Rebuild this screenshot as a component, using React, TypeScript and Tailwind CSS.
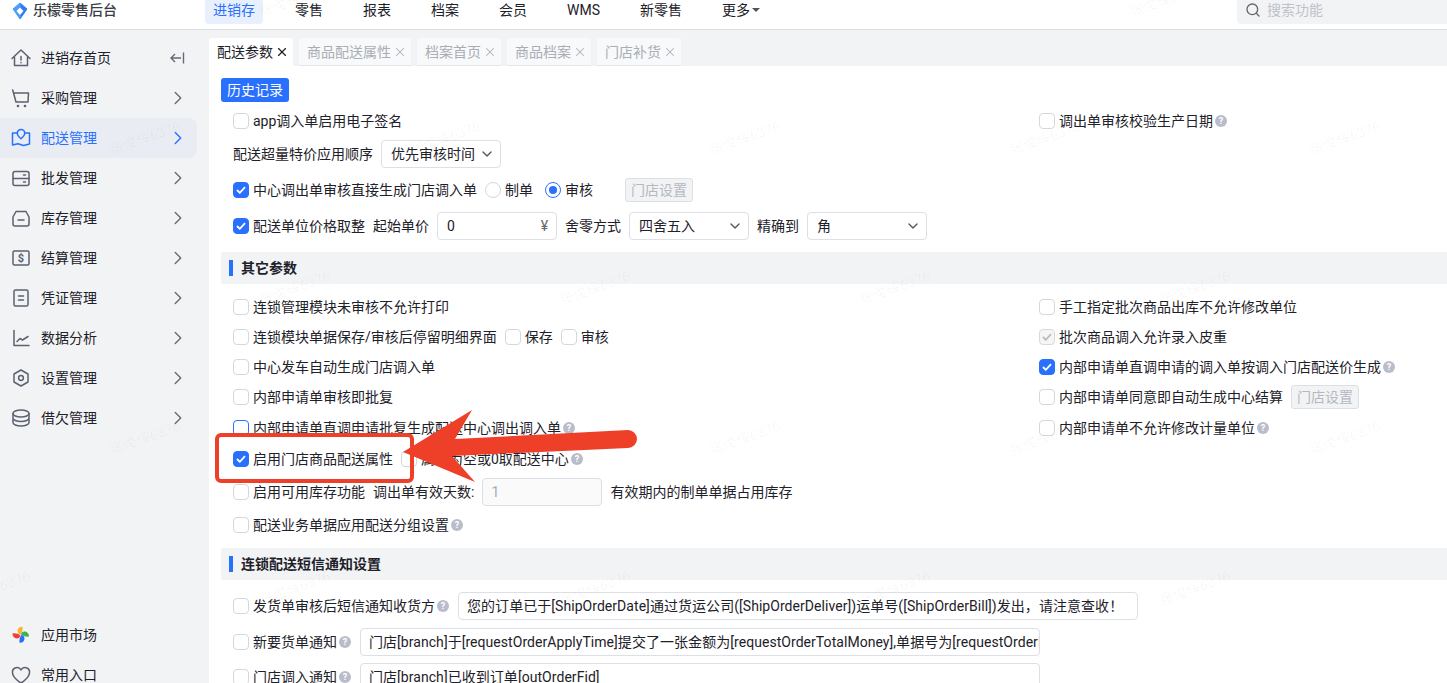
import type { ReactNode } from 'react';
import { ChevronDown, ChevronRight, Search, X } from 'lucide-react';

const navItems = ['进销存', '零售', '报表', '档案', '会员', 'WMS', '新零售'];
const tabs = ['配送参数', '商品配送属性', '档案首页', '商品档案', '门店补货'];

function Icon({ children, className = 'text-[#5c6070]' }: { children: ReactNode; className?: string }) {
  return (
    <svg width="20" height="20" viewBox="0 0 20 20" fill="none" stroke="currentColor" strokeWidth="1.5" strokeLinecap="round" strokeLinejoin="round" className={`shrink-0 ${className}`}>
      {children}
    </svg>
  );
}

const menu: { label: string; icon: ReactNode; active?: boolean }[] = [
  {
    label: '采购管理',
    icon: <><path d="M1.700 2L5 14h12l.5-9H3" /><circle cx="7" cy="18" r=".6" /><circle cx="14" cy="18" r=".6" /></>,
  },
  {
    label: '配送管理',
    active: true,
    icon: <><path d="M6.500 5H1.500v12l5.500-1.200 5.500 1.700 6-1.500V5h-5" /><path d="M10 1.500A3.800 3.800 0 0 1 13.800 5.300c0 2.200-3.800 5.500-3.800 5.500S6.200 7.500 6.200 5.300A3.800 3.800 0 0 1 10 1.500z" /></>,
  },
  {
    label: '批发管理',
    icon: <><rect x="2" y="3.500" width="16" height="14" rx="2" /><path d="M2 10.500h16M12.500 14h2M12.500 7h2" /></>,
  },
  {
    label: '库存管理',
    icon: <><path d="M5 3.500h10l3 5.500v7a2 2 0 0 1-2 2H4a2 2 0 0 1-2-2V9z" /><path d="M7 12h6" /></>,
  },
  {
    label: '结算管理',
    icon: <><rect x="2" y="3" width="16" height="14" rx="1.500" /><text x="10" y="14" textAnchor="middle" fontSize="11" fontWeight="700" fill="currentColor" stroke="none">$</text></>,
  },
  {
    label: '凭证管理',
    icon: <><rect x="3" y="2" width="14" height="16" rx="1.500" /><path d="M7.500 8h5M7.500 12h5" /></>,
  },
  {
    label: '数据分析',
    icon: <><path d="M3 2.500V17.500h15" /><path d="M6 13.500l3-3 2.500 1.500L17 8.500" /></>,
  },
  {
    label: '设置管理',
    icon: <><path d="M10 2l7 4v8l-7 4-7-4V6z" /><circle cx="10" cy="10" r="2.400" /></>,
  },
  {
    label: '借欠管理',
    icon: <><ellipse cx="10" cy="5.500" rx="8" ry="3.500" /><path d="M2 5.500v9c0 1.900 3.600 3.500 8 3.500s8-1.600 8-3.500v-9M2 10c0 1.900 3.600 3.500 8 3.500s8-1.600 8-3.500" /></>,
  },
];

function Check({ checked, disabled, focus }: { checked?: boolean; disabled?: boolean; focus?: boolean }) {
  if (checked) {
    return (
      <span className={`flex h-4 w-4 shrink-0 items-center justify-center rounded-[4px] border ${disabled ? 'border-[#d9d9d9] bg-[#f5f5f5]' : 'border-[#2970ff] bg-[#2970ff]'}`}>
        <svg width="10" height="8" viewBox="0 0 10 8" fill="none" stroke={disabled ? '#bbbbbb' : '#ffffff'} strokeWidth="1.800"><path d="M1 4l2.800 2.800L9 1.200" /></svg>
      </span>
    );
  }
  return <span className={`block h-4 w-4 shrink-0 rounded-[4px] border bg-white ${focus ? 'border-[#2970ff]' : 'border-[#d5d7dc]'}`} />;
}

function Opt({ children, checked, disabled, focus }: { children: ReactNode; checked?: boolean; disabled?: boolean; focus?: boolean }) {
  return (
    <span className="flex items-center gap-1 whitespace-nowrap">
      <Check checked={checked} disabled={disabled} focus={focus} />
      {children}
    </span>
  );
}

function Help() {
  return <span className="ml-[2px] flex h-3 w-3 shrink-0 items-center justify-center rounded-full bg-[#b9bdcb] text-[9px] leading-none font-bold text-white">?</span>;
}

function Radio({ label, checked }: { label: string; checked?: boolean }) {
  return (
    <span className="flex items-center gap-1">
      <span className={`flex h-4 w-4 items-center justify-center rounded-full border ${checked ? 'border-[#2970ff]' : 'border-[#d5d7dc]'}`}>
        {checked && <span className="h-2 w-2 rounded-full bg-[#2970ff]" />}
      </span>
      {label}
    </span>
  );
}

function SelectBox({ value }: { value: string }) {
  return (
    <span className="flex h-7 w-[120px] shrink-0 items-center justify-between rounded-[4px] border border-[#dcdfe6] pr-[5px] pl-[9px]">
      {value}
      <ChevronDown size={16} className="text-[#555]" />
    </span>
  );
}

function DisabledBtn() {
  return <span className="flex h-6 w-[68px] shrink-0 items-center justify-center rounded-[3px] border border-[#dddfe3] bg-[#f2f3f5] text-[#b5b8bf]">门店设置</span>;
}

function TextLine({ value }: { value: string }) {
  return <span className="block h-7 w-[680px] shrink-0 overflow-hidden rounded-[4px] border border-[#dcdfe6] px-2 leading-[27px] tracking-[0.05px] whitespace-nowrap">{value}</span>;
}

function Row({ left, right, className }: { left: ReactNode; right?: ReactNode; className: string }) {
  return (
    <div className={`grid grid-cols-[806px_1fr] items-center pl-3 ${className}`}>
      <div className="flex items-center">{left}</div>
      <div className="flex items-center">{right}</div>
    </div>
  );
}

function SectionBand({ title, className }: { title: string; className: string }) {
  return (
    <div className={`flex h-8 items-center gap-2 rounded-l-[2px] bg-[#f2f3f5] pl-2 font-bold ${className}`}>
      <span className="h-4 w-1 bg-[#2970ff]" />
      {title}
    </div>
  );
}

function Sidebar() {
  return (
    <aside className="flex w-[209px] shrink-0 flex-col overflow-hidden bg-[#f2f3f5] pt-2">
      <div className="flex h-10 shrink-0 items-center gap-[10px] pr-6 pl-[11px]">
        <Icon>
          <path d="M1 10.500L10 2l9 8.500" />
          <path d="M3.500 9v8.500h13V9" />
          <path d="M10 8.500v3.500M10 14.500v.3" />
        </Icon>
        <span className="flex-1">进销存首页</span>
        <svg width="16" height="14" viewBox="0 0 16 14" fill="none" stroke="#666a75" strokeWidth="1.400"><path d="M14.500 1.500v11M12 7H2M6 3L2 7l4 4" /></svg>
      </div>
      {menu.map((item) => (
        <div key={item.label} className={`flex h-10 w-[197px] shrink-0 items-center gap-[10px] rounded-r-lg pr-2 pl-[11px] ${item.active ? 'bg-[#e9ecf3] text-[#2970ff]' : ''}`}>
          <Icon className={item.active ? 'text-[#2970ff]' : undefined}>{item.icon}</Icon>
          <span className="flex-1">{item.label}</span>
          <ChevronRight size={22} strokeWidth={1.500} className={item.active ? 'text-[#2970ff]' : 'text-[#666a75]'} />
        </div>
      ))}
      <div className="mt-[177px] flex h-10 shrink-0 items-center gap-[10px] pl-[11px]">
        <svg width="20" height="20" viewBox="0 0 20 20" className="shrink-0">
          <path d="M9.500 9.500C6.500 9 6 6 7 4s3-2.500 4.500-2c.5 3-.5 5.500-2 7.500z" fill="#f8b62d" />
          <path d="M10 9.500c.5-3 3.500-3.500 5.500-2.500s2.500 3 2.500 4.500c-3 .5-6-.5-8-2z" fill="#3cb54a" />
          <path d="M10.500 10c3 .5 3.500 3.500 2.500 5.500s-3 2.500-4.500 2c-.5-3 .5-5.500 2-7.500z" fill="#2970ff" />
          <path d="M9.500 10.500c-.5 3-3.500 3.500-5.500 2.500S1.500 10 1.500 8.500c3-.5 6 .5 8 2z" fill="#ee4035" />
        </svg>
        应用市场
      </div>
      <div className="flex h-10 shrink-0 items-center gap-[10px] pl-[11px]">
        <Icon>
          <path d="M10 18S1.500 13 1.500 7.500A4.500 4.500 0 0 1 10 5a4.500 4.500 0 0 1 8.500 2.500C18.500 13 10 18 10 18z" />
        </Icon>
        常用入口
      </div>
    </aside>
  );
}

function TabStrip() {
  return (
    <div className="flex h-9 shrink-0 gap-[6px] bg-[#f2f3f5] pt-2">
      {tabs.map((tab, i) => (
        <span key={tab} className={`flex items-center gap-[2px] rounded-t-[3px] pr-1 pl-2 ${i === 0 ? 'bg-white' : 'border-b border-[#e5e6eb] bg-[#f8f9fa] text-[#a9adb5]'}`}>
          {tab}
          <X size={14} strokeWidth={i === 0 ? 2 : 1.800} className={i === 0 ? 'text-[#222]' : 'text-[#b0b3ba]'} />
        </span>
      ))}
    </div>
  );
}

function Settings() {
  return (
    <div className="relative flex-1 overflow-hidden bg-white pt-3 pl-3">
      <span className="flex h-6 w-[68px] items-center justify-center rounded-[3px] bg-[#2970ff] text-white">历史记录</span>

      <Row
        className="mt-[3px] h-8"
        left={<Opt>app调入单启用电子签名</Opt>}
        right={<><Opt>调出单审核校验生产日期</Opt><Help /></>}
      />
      <Row
        className="h-[33px]"
        left={<><span className="mr-2">配送超量特价应用顺序</span><SelectBox value="优先审核时间" /></>}
      />
      <Row
        className="h-10"
        left={
          <>
            <Opt checked>中心调出单审核直接生成门店调入单</Opt>
            <span className="ml-2 flex items-center gap-3"><Radio label="制单" /><Radio label="审核" checked /></span>
            <span className="ml-8"><DisabledBtn /></span>
          </>
        }
      />
      <Row
        className="h-8"
        left={
          <>
            <Opt checked>配送单位价格取整</Opt>
            <span className="mr-2 ml-2">起始单价</span>
            <span className="flex h-7 w-[120px] shrink-0 items-center justify-between rounded-[4px] border border-[#dcdfe6] pr-2 pl-[9px]">0<span className="text-[#666]">¥</span></span>
            <span className="mr-2 ml-2">舍零方式</span>
            <SelectBox value="四舍五入" />
            <span className="mr-2 ml-2">精确到</span>
            <SelectBox value="角" />
          </>
        }
      />

      <SectionBand title="其它参数" className="mt-[10px]" />

      <Row
        className="mt-2 h-[30px]"
        left={<Opt>连锁管理模块未审核不允许打印</Opt>}
        right={<Opt>手工指定批次商品出库不允许修改单位</Opt>}
      />
      <Row
        className="h-[30px]"
        left={<><Opt>连锁模块单据保存/审核后停留明细界面</Opt><span className="ml-2"><Opt>保存</Opt></span><span className="ml-2"><Opt>审核</Opt></span></>}
        right={<Opt checked disabled>批次商品调入允许录入皮重</Opt>}
      />
      <Row
        className="h-[30px]"
        left={<Opt>中心发车自动生成门店调入单</Opt>}
        right={<><Opt checked>内部申请单直调申请的调入单按调入门店配送价生成</Opt><Help /></>}
      />
      <Row
        className="h-[30px]"
        left={<Opt>内部申请单审核即批复</Opt>}
        right={<><Opt>内部申请单同意即自动生成中心结算</Opt><span className="ml-2"><DisabledBtn /></span></>}
      />
      <Row
        className="h-8"
        left={<><Opt focus>内部申请单直调申请批复生成配送中心调出调入单</Opt><Help /></>}
        right={<><Opt>内部申请单不允许修改计量单位</Opt><Help /></>}
      />
      <Row
        className="h-[30px]"
        left={<><Opt checked>启用门店商品配送属性</Opt><span className="ml-2"><Opt>属性为空或0取配送中心</Opt></span><Help /></>}
      />
      <Row
        className="h-9"
        left={
          <>
            <Opt>启用可用库存功能</Opt>
            <span className="ml-2">调出单有效天数:</span>
            <span className="ml-2 flex h-7 w-[120px] shrink-0 items-center rounded-[4px] border border-[#dcdfe6] bg-[#fafafa] pl-2 text-[#aaa]">1</span>
            <span className="ml-2">有效期内的制单单据占用库存</span>
          </>
        }
      />
      <Row className="h-[30px]" left={<><Opt>配送业务单据应用配送分组设置</Opt><Help /></>} />

      <SectionBand title="连锁配送短信通知设置" className="mt-2" />

      <Row
        className="mt-[10px] h-8"
        left={<><Opt>发货单审核后短信通知收货方</Opt><Help /><span className="ml-[9px]"><TextLine value="您的订单已于[ShipOrderDate]通过货运公司([ShipOrderDeliver])运单号([ShipOrderBill])发出，请注意查收！" /></span></>}
      />
      <Row
        className="h-10"
        left={<><Opt>新要货单通知</Opt><Help /><span className="ml-[9px]"><TextLine value="门店[branch]于[requestOrderApplyTime]提交了一张金额为[requestOrderTotalMoney],单据号为[requestOrderFid]的要货单" /></span></>}
      />
      <Row
        className="h-[30px]"
        left={<><Opt>门店调入通知</Opt><Help /><span className="ml-[9px]"><TextLine value="门店[branch]已收到订单[outOrderFid]" /></span></>}
      />
    </div>
  );
}

const marks = [
  ...[295, 1165].map((x) => [x, 0]),
  ...[145, 445, 745, 1045, 1345].map((x) => [x, 138]),
  ...[295, 595, 895, 1195].map((x) => [x, 288]),
  ...[145, 445, 745, 1045, 1345].map((x) => [x, 438]),
  ...[-5, 295, 595, 895, 1195].map((x) => [x, 588]),
];

export default function App() {
  return (
    <div className="relative flex h-[683px] w-[1447px] flex-col overflow-hidden bg-white font-['Roboto','Noto_Sans_CJK_SC',sans-serif] text-sm text-[#1d2129]">
      <header className="flex h-[30px] shrink-0 border-b border-[#dcdddf] bg-white">
        <div className="flex w-[205px] items-start gap-[5px] pt-[2px] pl-3">
          <svg width="16" height="18" viewBox="0 0 16 18" className="shrink-0">
            <path d="M8 1l7 6-7 10z" fill="#2f7cf6" stroke="#2f7cf6" strokeLinejoin="round" />
            <path d="M8 1L1 7l7 10z" fill="#4f9dfb" stroke="#4f9dfb" strokeLinejoin="round" />
            <path d="M8 5.500l3.500 3.500L8 13 4.500 9z" fill="#ffffff" />
          </svg>
          <span className="leading-4 font-medium text-[#3a3d45]">乐檬零售后台</span>
        </div>
        <nav className="flex flex-1 items-start gap-6">
          {navItems.map((item, i) => (
            <span key={item} className={`flex h-6 items-center rounded-b-[4px] px-2 pb-1 ${i === 0 ? 'bg-[#e8effd] text-[#2970ff]' : ''}`}>{item}</span>
          ))}
          <span className="flex h-6 items-center gap-[2px] px-2 pb-1">
            更多
            <span className="h-0 w-0 border-x-[4px] border-t-[4px] border-x-transparent border-t-[#555]" />
          </span>
        </nav>
        <div className="flex h-6 w-[210px] items-center gap-[6px] rounded-bl-[4px] bg-[#f2f3f5] pb-1 pl-2 text-[#bfc2c8]">
          <Search size={16} className="text-[#666]" />
          搜索功能
        </div>
      </header>

      <div className="flex min-h-0 flex-1">
        <Sidebar />
        <main className="flex min-w-0 flex-1 flex-col">
          <TabStrip />
          <Settings />
        </main>
      </div>

      {/* watermark */}
      <div className="pointer-events-none absolute inset-0 overflow-hidden">
        {marks.map(([x, y]) => (
          <span key={`${x}-${y}`} className="absolute -translate-x-1/2 -translate-y-1/2 -rotate-[20deg] text-[14px] whitespace-nowrap text-black/[0.04]" style={{ left: x, top: y }}>
            张俊辉6376
          </span>
        ))}
      </div>

      {/* annotation */}
      <div className="pointer-events-none absolute top-[433px] left-[215px] h-[50px] w-[199px] rounded-md border-[4px] border-[#ee4028]" />
      <svg className="pointer-events-none absolute top-[405px] left-[395px]" width="250" height="85" viewBox="395 405 250 85">
        <path d="M403 452L472 410L455 439L628 430A9 9 0 0 1 628 448L452 456L475 482Z" fill="#ee4028" />
      </svg>
    </div>
  );
}
